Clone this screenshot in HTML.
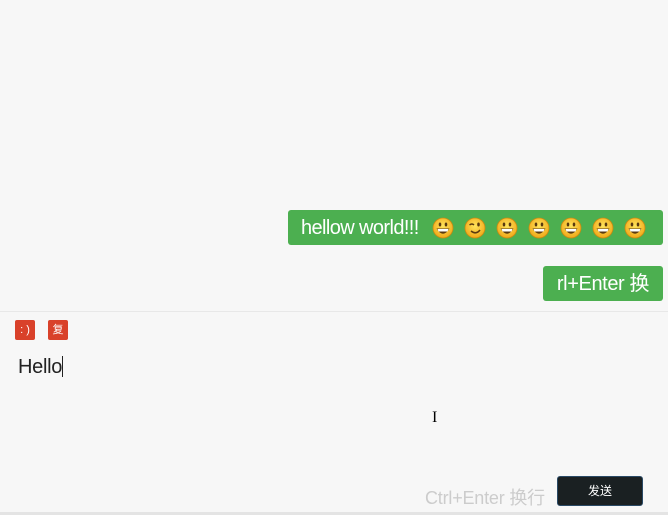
<!DOCTYPE html>
<html><head><meta charset="utf-8"><style>
body{margin:0;width:668px;height:515px;background:#f7f7f7;position:relative;overflow:hidden;font-family:"Liberation Sans","Noto Sans CJK SC",sans-serif}
.b{position:absolute;background:#4caf50;color:#fff;border-radius:3px;font-size:20px;line-height:36px}
.e{position:absolute;top:217px;width:22px;height:22px}
.ic{position:absolute;top:320px;width:20px;height:20px;background:#d9412a;border-radius:2px;color:#fff;font-size:11px;line-height:20px;text-align:center}
</style></head><body>
<div class="b" style="left:288px;top:210px;width:375px;height:35px;padding-left:13px;box-sizing:border-box;letter-spacing:-0.6px">hellow world!!!</div>
<svg width="0" height="0" style="position:absolute"><defs>
<radialGradient id="g" cx="50%" cy="40%" r="60%"><stop offset="0" stop-color="#ffe45c"/><stop offset="1" stop-color="#f0a818"/></radialGradient>
<symbol id="s" viewBox="0 0 22 22"><circle cx="11" cy="11" r="10" fill="url(#g)" stroke="#c98a10" stroke-width="0.8"/><ellipse cx="8" cy="7.5" rx="1.3" ry="2" fill="#5a3a10"/><ellipse cx="14" cy="7.5" rx="1.3" ry="2" fill="#5a3a10"/><path d="M4.5 11.5 Q11 22 17.5 11.5 Z" fill="#5a3a10"/><path d="M5.5 12 L16.5 12 L15.5 14.5 L6.5 14.5Z" fill="#fff"/></symbol>
<symbol id="w" viewBox="0 0 22 22"><circle cx="11" cy="11" r="10" fill="url(#g)" stroke="#c98a10" stroke-width="0.8"/><path d="M5.5 8 Q8 6 10 8" stroke="#5a3a10" fill="none" stroke-width="1.4"/><ellipse cx="14.5" cy="7.5" rx="1.3" ry="2" fill="#5a3a10"/><path d="M7 14 Q12 18 16 13" stroke="#5a3a10" fill="none" stroke-width="1.5"/></symbol>
</defs></svg>
<svg class="e" style="left:432px"><use href="#s"/></svg>
<svg class="e" style="left:464px"><use href="#w"/></svg>
<svg class="e" style="left:496px"><use href="#s"/></svg>
<svg class="e" style="left:528px"><use href="#s"/></svg>
<svg class="e" style="left:560px"><use href="#s"/></svg>
<svg class="e" style="left:592px"><use href="#s"/></svg>
<svg class="e" style="left:624px"><use href="#s"/></svg>
<div class="b" style="left:543px;top:266px;width:120px;height:35px;text-align:center;letter-spacing:-0.4px">rl+Enter 换</div>
<div style="position:absolute;left:0;top:311px;width:668px;height:1px;background:#e8e8e8"></div>
<div class="ic" style="left:15px">: )</div>
<div class="ic" style="left:48px">复</div>
<div style="position:absolute;left:18px;top:356px;font-size:20px;color:#222;letter-spacing:-0.3px">Hello<span style="display:inline-block;width:1px;height:21px;background:#222;vertical-align:-4px"></span></div>
<div style="position:absolute;left:432px;top:409px;font-size:16px;font-family:'Liberation Serif',serif">I</div>
<div style="position:absolute;left:425px;top:484px;font-size:18px;color:#ccc;letter-spacing:-0.2px">Ctrl+Enter 换行</div>
<div style="position:absolute;left:557px;top:476px;width:86px;height:30px;box-sizing:border-box;background:#1a2022;border:1px solid #2a4a66;border-radius:3px;color:#fff;font-size:12px;line-height:28px;text-align:center">发送</div>
<div style="position:absolute;left:0;top:512px;width:668px;height:3px;background:#e4e4e4"></div>
</body></html>
